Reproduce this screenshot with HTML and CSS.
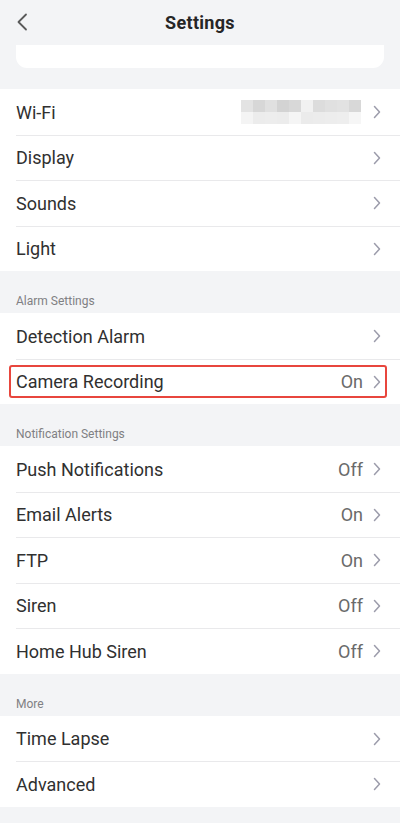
FILE: index.html
```html
<!DOCTYPE html>
<html>
<head>
<meta charset="utf-8">
<link rel="stylesheet" href="styles.css">
</head>
<body>
<div class="page">
  <header class="topbar">
    <svg class="back" viewBox="0 0 12 18" width="12" height="18"><path d="M10 1.5 L2.5 9 L10 16.5" fill="none" stroke="#5a5a5a" stroke-width="1.8" stroke-linecap="round" stroke-linejoin="round"/></svg>
    <h1 class="title">Settings</h1>
  </header>
  <div class="card"></div>

  <div class="group first">
    <div class="row"><span class="label">Wi-Fi</span>
      <span class="blur"><i></i><i></i><i></i><i></i><i></i><i></i><i></i><i></i><i></i><i></i><i></i><i></i><i></i><i></i><i></i><i></i><i></i><i></i><i></i><i></i></span>
      <svg class="chev" viewBox="0 0 8 14" width="8" height="14"><path d="M1.5 1.5 L6.5 7 L1.5 12.5" fill="none" stroke="#9c9cab" stroke-width="1.5" stroke-linecap="round" stroke-linejoin="round"/></svg></div>
    <div class="row"><span class="label">Display</span><svg class="chev" viewBox="0 0 8 14" width="8" height="14"><path d="M1.5 1.5 L6.5 7 L1.5 12.5" fill="none" stroke="#9c9cab" stroke-width="1.5" stroke-linecap="round" stroke-linejoin="round"/></svg></div>
    <div class="row"><span class="label">Sounds</span><svg class="chev" viewBox="0 0 8 14" width="8" height="14"><path d="M1.5 1.5 L6.5 7 L1.5 12.5" fill="none" stroke="#9c9cab" stroke-width="1.5" stroke-linecap="round" stroke-linejoin="round"/></svg></div>
    <div class="row"><span class="label">Light</span><svg class="chev" viewBox="0 0 8 14" width="8" height="14"><path d="M1.5 1.5 L6.5 7 L1.5 12.5" fill="none" stroke="#9c9cab" stroke-width="1.5" stroke-linecap="round" stroke-linejoin="round"/></svg></div>
  </div>

  <div class="section">Alarm Settings</div>
  <div class="group">
    <div class="row"><span class="label">Detection Alarm</span><svg class="chev" viewBox="0 0 8 14" width="8" height="14"><path d="M1.5 1.5 L6.5 7 L1.5 12.5" fill="none" stroke="#9c9cab" stroke-width="1.5" stroke-linecap="round" stroke-linejoin="round"/></svg></div>
    <div class="row highlighted"><span class="label">Camera Recording</span><span class="value">On</span><svg class="chev" viewBox="0 0 8 14" width="8" height="14"><path d="M1.5 1.5 L6.5 7 L1.5 12.5" fill="none" stroke="#9c9cab" stroke-width="1.5" stroke-linecap="round" stroke-linejoin="round"/></svg></div>
  </div>

  <div class="section">Notification Settings</div>
  <div class="group">
    <div class="row"><span class="label">Push Notifications</span><span class="value">Off</span><svg class="chev" viewBox="0 0 8 14" width="8" height="14"><path d="M1.5 1.5 L6.5 7 L1.5 12.5" fill="none" stroke="#9c9cab" stroke-width="1.5" stroke-linecap="round" stroke-linejoin="round"/></svg></div>
    <div class="row"><span class="label">Email Alerts</span><span class="value">On</span><svg class="chev" viewBox="0 0 8 14" width="8" height="14"><path d="M1.5 1.5 L6.5 7 L1.5 12.5" fill="none" stroke="#9c9cab" stroke-width="1.5" stroke-linecap="round" stroke-linejoin="round"/></svg></div>
    <div class="row"><span class="label">FTP</span><span class="value">On</span><svg class="chev" viewBox="0 0 8 14" width="8" height="14"><path d="M1.5 1.5 L6.5 7 L1.5 12.5" fill="none" stroke="#9c9cab" stroke-width="1.5" stroke-linecap="round" stroke-linejoin="round"/></svg></div>
    <div class="row"><span class="label">Siren</span><span class="value">Off</span><svg class="chev" viewBox="0 0 8 14" width="8" height="14"><path d="M1.5 1.5 L6.5 7 L1.5 12.5" fill="none" stroke="#9c9cab" stroke-width="1.5" stroke-linecap="round" stroke-linejoin="round"/></svg></div>
    <div class="row"><span class="label">Home Hub Siren</span><span class="value">Off</span><svg class="chev" viewBox="0 0 8 14" width="8" height="14"><path d="M1.5 1.5 L6.5 7 L1.5 12.5" fill="none" stroke="#9c9cab" stroke-width="1.5" stroke-linecap="round" stroke-linejoin="round"/></svg></div>
  </div>

  <div class="section">More</div>
  <div class="group">
    <div class="row"><span class="label">Time Lapse</span><svg class="chev" viewBox="0 0 8 14" width="8" height="14"><path d="M1.5 1.5 L6.5 7 L1.5 12.5" fill="none" stroke="#9c9cab" stroke-width="1.5" stroke-linecap="round" stroke-linejoin="round"/></svg></div>
    <div class="row"><span class="label">Advanced</span><svg class="chev" viewBox="0 0 8 14" width="8" height="14"><path d="M1.5 1.5 L6.5 7 L1.5 12.5" fill="none" stroke="#9c9cab" stroke-width="1.5" stroke-linecap="round" stroke-linejoin="round"/></svg></div>
  </div>
</div>
</body>
</html>
```
FILE: styles.css
```css
html, body {
  margin: 0;
  padding: 0;
  background: #f3f4f6;
}
body {
  font-family: Roboto, "Noto Sans", sans-serif;
  color: #222;
}
.page {
  width: 400px;
  height: 823px;
  overflow: hidden;
  background: #f3f4f6;
}
.topbar {
  height: 45px;
  display: flex;
  align-items: center;
  justify-content: center;
  position: relative;
}
.back {
  position: absolute;
  left: 16px;
  top: 13px;
}
.title {
  margin: 0;
  font-size: 18px;
  font-weight: 700;
  color: #262626;
  letter-spacing: 0.3px;
}
.card {
  margin: 0 16px;
  height: 23px;
  background: #fff;
  border-radius: 0 0 11px 11px;
}
.group {
  background: #fff;
}
.group.first {
  margin-top: 21px;
}
.row {
  height: 45.5px;
  box-sizing: border-box;
  display: flex;
  align-items: center;
  padding: 1px 19px 0 16px;
  position: relative;
  font-size: 18px;
}
.row + .row::before {
  content: "";
  position: absolute;
  left: 16px;
  right: 0;
  top: 0;
  height: 1px;
  background: #e9e9eb;
}
.label {
  flex: 1;
  color: #303030;
}
.value {
  color: #6a6a6a;
  margin-right: 10px;
}
.chev {
  display: block;
}
.highlighted::after {
  content: "";
  position: absolute;
  left: 9px;
  right: 13px;
  top: 6px;
  bottom: 6px;
  border: 2px solid #e8463d;
  border-radius: 3px;
}
.section {
  height: 42px;
  box-sizing: border-box;
  display: flex;
  align-items: flex-end;
  padding: 0 16px 5px;
  font-size: 12px;
  line-height: 14px;
  color: #808083;
}
.blur {
  display: grid;
  grid-template-columns: repeat(10, 12px);
  grid-template-rows: 12px 12px;
  margin-right: 12px;
}
.blur i { display: block; }
.blur i:nth-child(1) { background: #e3e3e3; }
.blur i:nth-child(2) { background: #d7d7d7; }
.blur i:nth-child(3) { background: #e0e0e0; }
.blur i:nth-child(4) { background: #d3d3d3; }
.blur i:nth-child(5) { background: #d8d8d8; }
.blur i:nth-child(6) { background: #f1f1f1; }
.blur i:nth-child(7) { background: #dcdcdc; }
.blur i:nth-child(8) { background: #e0e0e0; }
.blur i:nth-child(9) { background: #e2e2e2; }
.blur i:nth-child(10) { background: #d8d8d8; }
.blur i:nth-child(11) { background: #f4f4f4; }
.blur i:nth-child(12) { background: #ececec; }
.blur i:nth-child(13) { background: #ededed; }
.blur i:nth-child(14) { background: #ececec; }
.blur i:nth-child(15) { background: #f5f5f5; }
.blur i:nth-child(16) { background: #ebebeb; }
.blur i:nth-child(17) { background: #ececec; }
.blur i:nth-child(18) { background: #ededed; }
.blur i:nth-child(19) { background: #eeeeee; }
.blur i:nth-child(20) { background: #f6f6f6; }
```
